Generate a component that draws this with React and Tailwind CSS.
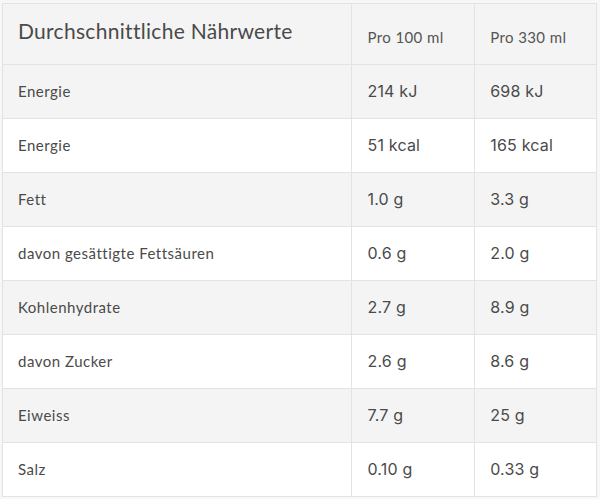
import React from "react";

const rows = [
  ["Energie", "214 kJ", "698 kJ", true],
  ["Energie", "51 kcal", "165 kcal", false],
  ["Fett", "1.0 g", "3.3 g", true],
  ["davon gesättigte Fettsäuren", "0.6 g", "2.0 g", false],
  ["Kohlenhydrate", "2.7 g", "8.9 g", true],
  ["davon Zucker", "2.6 g", "8.6 g", false],
  ["Eiweiss", "7.7 g", "25 g", true],
  ["Salz", "0.10 g", "0.33 g", false],
];

export default function App() {
  return (
    <div className="w-[600px] h-[499px] bg-[#f7f7f7] pt-[3px] pl-[2px] overflow-hidden">
      <table className="border-collapse w-[595px] text-[#555]">
        <colgroup>
          <col className="w-[350px]" />
          <col className="w-[123px]" />
          <col className="w-[122px]" />
        </colgroup>
        <thead>
          <tr className="bg-[#f4f4f4] h-[61px]">
            <th className="border border-[#e3e3e3] text-left font-normal pl-[15px] pb-[6px] text-[21px] tracking-[0.3px] text-[#4a4a4a] font-['Lato',sans-serif]">
              Durchschnittliche Nährwerte
            </th>
            <th className="border border-[#e3e3e3] text-left font-normal pl-[15px] pt-[6px] text-[15px] tracking-[0.4px] text-[#555] font-['Lato',sans-serif]">
              Pro 100 ml
            </th>
            <th className="border border-[#e3e3e3] text-left font-normal pl-[15px] pt-[6px] text-[15px] tracking-[0.4px] text-[#555] font-['Lato',sans-serif]">
              Pro 330 ml
            </th>
          </tr>
        </thead>
        <tbody>
          {rows.map(([label, a, b, shaded], i) => (
            <tr key={i} className={`h-[54px] ${shaded ? "bg-[#f4f4f4]" : "bg-white"}`}>
              <td className="border border-[#e3e3e3] pl-[15px] pb-[1px] text-[15px] tracking-[0.5px] text-[#4a4a4a] font-['Lato',sans-serif]">
                {label}
              </td>
              <td className="border border-[#e3e3e3] pl-[15px] pb-[1px] text-[16px] tracking-[0.2px] text-[#4a4a4a] font-['Inter',sans-serif]">
                {a}
              </td>
              <td className="border border-[#e3e3e3] pl-[15px] pb-[1px] text-[16px] tracking-[0.2px] text-[#4a4a4a] font-['Inter',sans-serif]">
                {b}
              </td>
            </tr>
          ))}
        </tbody>
      </table>
    </div>
  );
}
